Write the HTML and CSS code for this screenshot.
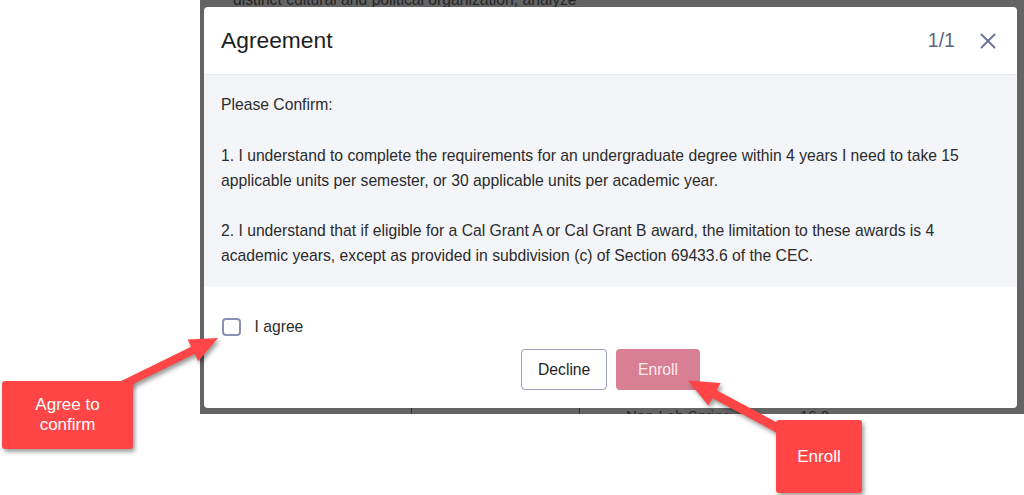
FILE: index.html
```html
<!DOCTYPE html>
<html lang="en">
<head>
<meta charset="utf-8">
<title>Agreement</title>
<link rel="stylesheet" href="styles.css">
</head>
<body>
<div class="canvas">
  <div class="shot">
    <div class="page-top">distinct cultural and political organization, analyze</div>
    <div class="page-row">
      <div class="cell cell-a"></div>
      <div class="cell cell-b"></div>
      <div class="cell cell-c">Non-Lab Spring</div>
      <div class="cell cell-d">16.0</div>
    </div>

    <div class="modal" role="dialog" aria-labelledby="ttl">
      <div class="modal-head">
        <h2 class="modal-title" id="ttl">Agreement</h2>
        <div class="head-right">
          <span class="counter">1/1</span>
          <svg class="close" width="16" height="16" viewBox="0 0 16 16" aria-label="Close">
            <path d="M1.5 1.5 L14.5 14.5 M14.5 1.5 L1.5 14.5" stroke="#6b7399" stroke-width="1.9" stroke-linecap="round" fill="none"/>
          </svg>
        </div>
      </div>
      <div class="modal-body">
        <p>Please Confirm:</p>
        <p>1. I understand to complete the requirements for an undergraduate degree within 4 years I need to take 15 applicable units per semester, or 30 applicable units per academic year.</p>
        <p>2. I understand that if eligible for a Cal Grant A or Cal Grant B award, the limitation to these awards is 4 academic years, except as provided in subdivision (c) of Section 69433.6 of the CEC.</p>
      </div>
      <div class="modal-foot">
        <label class="agree"><span class="box"></span><span>I agree</span></label>
        <div class="actions">
          <button class="btn btn-decline">Decline</button>
          <button class="btn btn-enroll">Enroll</button>
        </div>
      </div>
    </div>
  </div>

  <svg class="arrows" width="1024" height="495" viewBox="0 0 1024 495">
    <polygon points="121.8,389.6 194.7,353.9 198.2,361.2 218,338 187.6,339.4 191.1,346.7 118.2,382.4"/>
    <polygon points="802.1,436 716.6,390.2 720.6,382.9 688,380.5 708.3,405.4 712.4,398.2 797.9,444"/>
  </svg>

  <div class="callout callout-agree">Agree to<br>confirm</div>
  <div class="callout callout-enroll">Enroll</div>
</div>
</body>
</html>
```

FILE: styles.css
```css
* { box-sizing: border-box; }
html, body { margin: 0; padding: 0; background: #ffffff; }
body {
  font-family: "Liberation Sans", Arial, sans-serif;
  width: 1024px;
  height: 495px;
  overflow: hidden;
}
.canvas {
  position: relative;
  width: 1024px;
  height: 495px;
}
.shot {
  position: relative;
  margin-left: 200px;
  width: 824px;
  height: 414px;
  background: #646464;
  overflow: hidden;
  display: flex;
  flex-direction: column;
}
.page-top {
  margin-top: -9px;
  padding-left: 33px;
  font-size: 15.7px;
  line-height: 18px;
  color: #262626;
  white-space: nowrap;
}
.page-row {
  margin-top: auto;
  height: 6px;
  display: flex;
  overflow: visible;
}
.cell {
  height: 6px;
  font-size: 15px;
  line-height: 18px;
  color: #2a2a2a;
  white-space: nowrap;
}
.cell-a { width: 212px; border-right: 1px solid #333; }
.cell-b { width: 168px; border-right: 1px solid #333; }
.cell-c { width: 220px; padding-left: 46px; margin-top: -1px; height: 7px; overflow: hidden; }
.cell-d { margin-top: -1px; height: 7px; overflow: hidden; }

.modal {
  position: absolute;
  left: 4px;
  top: 7px;
  width: 813px;
  height: 401px;
  background: #ffffff;
  border-radius: 4px;
  display: flex;
  flex-direction: column;
  overflow: hidden;
}
.modal-head {
  height: 68px;
  display: flex;
  align-items: center;
  justify-content: space-between;
  padding: 0 21px 0 17px;
  border-bottom: 1px solid #e3e5ee;
  flex: none;
}
.modal-title {
  margin: 0;
  font-size: 22.8px;
  font-weight: 400;
  color: #1e1e1e;
}
.head-right {
  display: flex;
  align-items: center;
  gap: 25px;
}
.counter {
  font-size: 19.6px;
  color: #5b6584;
}
.close { display: block; }

.modal-body {
  background: #f4f5f9;
  padding: 17px 17px 19px 17px;
  font-size: 15.7px;
  line-height: 25px;
  color: #2b2b2b;
  flex: none;
}
.modal-body p { margin: 0 0 25.5px 0; }
.modal-body p:last-child { margin-bottom: 0; }

.modal-foot {
  flex: 1;
  padding: 31px 17px 18px 17px;
  display: flex;
  flex-direction: column;
}
.agree {
  display: flex;
  align-items: center;
  gap: 14px;
  height: 18px;
  padding-left: 1px;
  font-size: 15.7px;
  color: #2b2b2b;
}
.box {
  width: 18.5px;
  height: 18.5px;
  border: 2px solid #8a90b6;
  border-radius: 4px;
  background: #fff;
}
.actions {
  margin-top: 13px;
  display: flex;
  justify-content: center;
  gap: 9px;
}
.btn {
  height: 41px;
  font-family: "Liberation Sans", Arial, sans-serif;
  font-size: 15.7px;
  border-radius: 4px;
  padding: 0 16px;
  cursor: pointer;
}
.btn-decline {
  width: 86px;
  background: #ffffff;
  border: 1px solid #9ea4bb;
  color: #1e1e1e;
}
.btn-enroll {
  width: 84px;
  background: #d87f93;
  border: none;
  color: #fbecef;
}

.arrows {
  position: absolute;
  left: 0;
  top: 0;
  pointer-events: none;
}
.arrows polygon {
  fill: #ff4545;
  filter: drop-shadow(2px 3px 2px rgba(0,0,0,0.4));
}
.callout {
  position: absolute;
  background: #ff4545;
  color: #ffffff;
  font-size: 17px;
  line-height: 20px;
  text-align: center;
  border-radius: 3px;
  box-shadow: 2px 3px 4px rgba(0,0,0,0.38);
  display: flex;
  align-items: center;
  justify-content: center;
}
.callout-agree {
  left: 2px;
  top: 381px;
  width: 131px;
  height: 68px;
}
.callout-enroll {
  left: 776px;
  top: 420px;
  width: 86px;
  height: 73px;
}
```
